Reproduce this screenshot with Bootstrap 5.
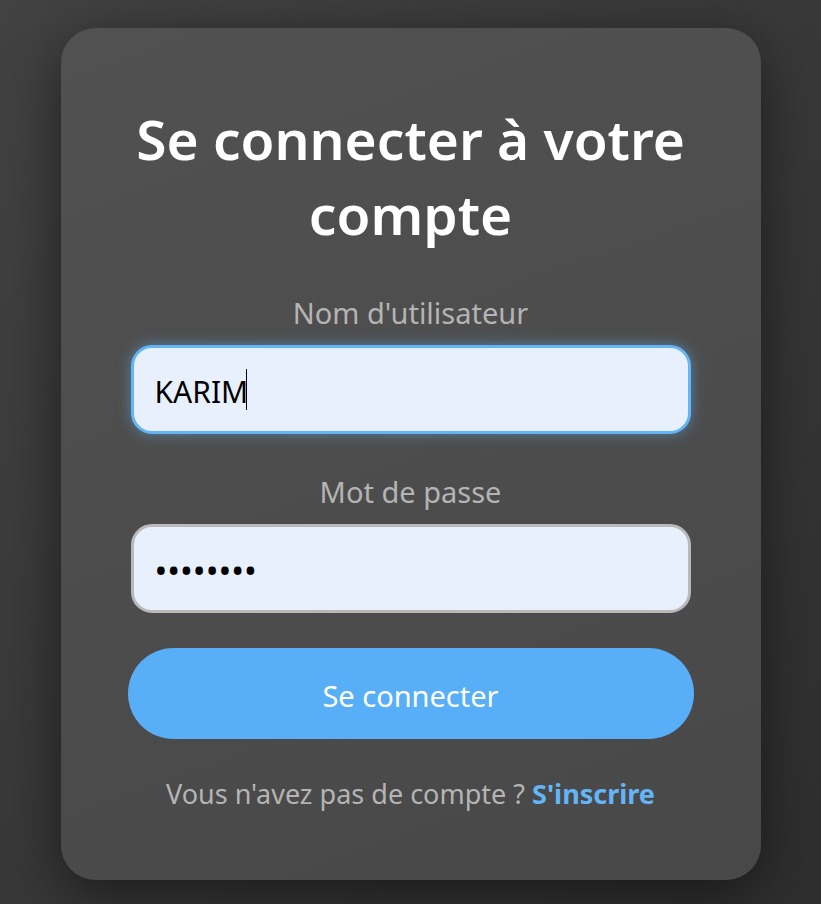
<!DOCTYPE html>
<html lang="fr">
<head>
<meta charset="utf-8">
<meta name="viewport" content="width=device-width, initial-scale=1">
<title>Se connecter</title>
<link href="https://cdn.jsdelivr.net/npm/bootstrap@5.3.0/dist/css/bootstrap.min.css" rel="stylesheet">
<style>
  body {
    font-family: "Segoe UI", "Noto Sans", sans-serif;
    background: linear-gradient(135deg, #424242, #2e2e2e);
    color: #b4b4b4;
    padding: 28px 24px 24px;
  }
  .login-panel {
    max-width: 700px;
    padding: 73px 70px 68px;
    border-radius: 35px;
    background: linear-gradient(160deg, #515151, #484848);
    box-shadow: 0 14px 56px rgba(0, 0, 0, .5);
  }
  .login-title {
    font-size: 55px;
    line-height: 75px;
    font-weight: 600;
    margin-bottom: 41px;
  }
  .login-label {
    font-size: 29px;
    line-height: 42px;
    margin-bottom: 11px;
  }
  .login-field { margin-bottom: 37px; }
  .login-field.last-field { margin-bottom: 35px; }
  .login-input, .login-input:focus {
    height: 89px;
    padding: 3px 21px 0;
    font-size: 30px;
    color: #000;
    background: #e8f0fe;
    border: 3px solid #bab8b8;
    border-radius: 21px;
  }
  .login-input[type="password"] { font-size: 34px; }
  .login-input.is-current, .login-input.is-current:focus {
    border-color: #64b5f6;
    box-shadow: 0 0 14px rgba(100, 181, 246, .5);
    caret-color: transparent;
  }
  .text-caret {
    left: 115px;
    width: 1px;
    height: 41px;
    background: #000;
  }
  .login-submit, .login-submit:hover {
    height: 91px;
    margin: 0 -3px 37px;
    padding: 4px 12px 0;
    font-size: 29px;
    color: #fff;
    background: #58aef7;
    border: 0;
  }
  .login-note { font-size: 27px; line-height: 36px; }
  .login-note a { color: #64b5f6; }
</style>
</head>
<body class="min-vh-100 d-flex align-items-center justify-content-center">
<main class="login-panel w-100 text-center">
  <h1 class="login-title text-white">Se connecter à votre compte</h1>
  <form class="d-flex flex-column">
    <div class="login-field">
      <label class="login-label d-block" for="username">Nom d'utilisateur</label>
      <div class="position-relative d-flex align-items-center">
        <input class="login-input is-current form-control" id="username" type="text" value="KARIM" autocomplete="username">
        <span class="text-caret position-absolute" aria-hidden="true"></span>
      </div>
    </div>
    <div class="login-field last-field">
      <label class="login-label d-block" for="password">Mot de passe</label>
      <input class="login-input form-control" id="password" type="password" value="password" autocomplete="current-password">
    </div>
    <button class="login-submit btn rounded-pill" type="submit">Se connecter</button>
  </form>
  <p class="login-note mb-0">Vous n'avez pas de compte ? <a class="fw-bold text-decoration-none" href="#">S'inscrire</a></p>
</main>
<script src="https://cdn.jsdelivr.net/npm/bootstrap@5.3.0/dist/js/bootstrap.bundle.min.js"></script>
</body>
</html>
